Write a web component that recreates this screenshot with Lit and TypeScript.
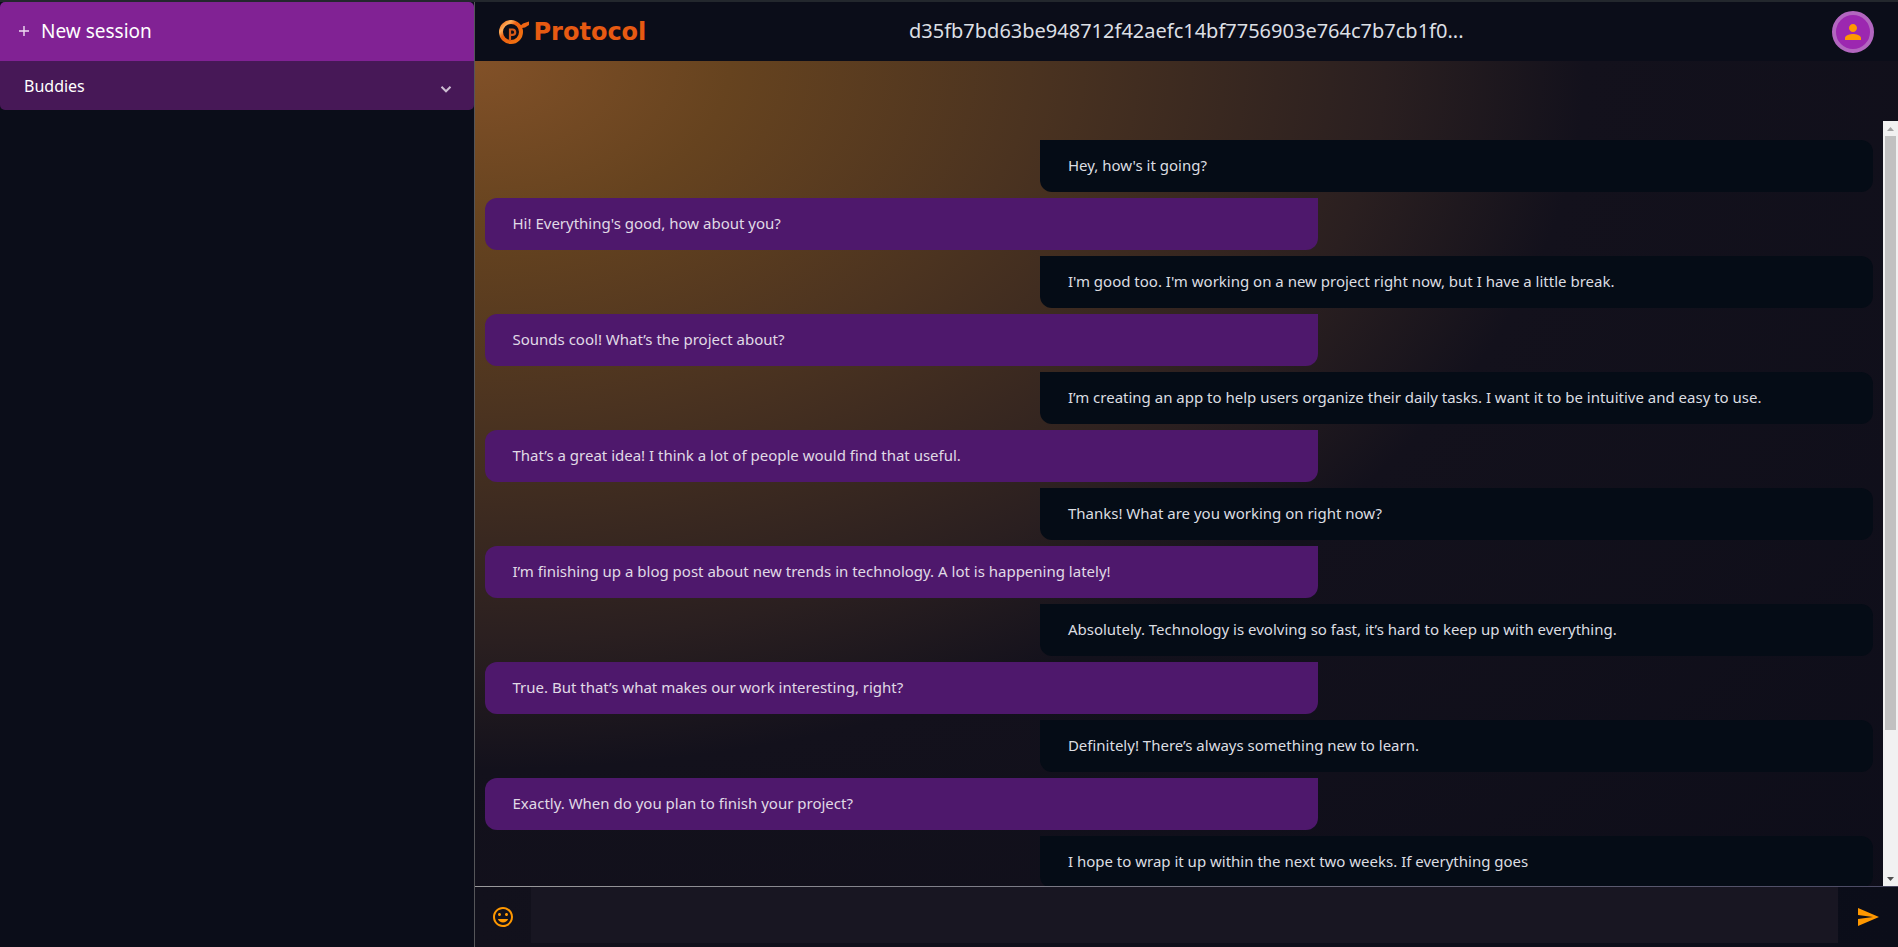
import { LitElement, html, css } from "lit";
import { customElement, query, state } from "lit/decorators.js";
import { classMap } from "lit/directives/class-map.js";
import { styleMap } from "lit/directives/style-map.js";

interface Message {
  text: string;
  own: boolean;
}

const MESSAGES: Message[] = [
  { own: true, text: "Hey, how's it going?" },
  { own: false, text: "Hi! Everything's good, how about you?" },
  { own: true, text: "I'm good too. I'm working on a new project right now, but I have a little break." },
  { own: false, text: "Sounds cool! What’s the project about?" },
  { own: true, text: "I’m creating an app to help users organize their daily tasks. I want it to be intuitive and easy to use." },
  { own: false, text: "That’s a great idea! I think a lot of people would find that useful." },
  { own: true, text: "Thanks! What are you working on right now?" },
  { own: false, text: "I’m finishing up a blog post about new trends in technology. A lot is happening lately!" },
  { own: true, text: "Absolutely. Technology is evolving so fast, it’s hard to keep up with everything." },
  { own: false, text: "True. But that’s what makes our work interesting, right?" },
  { own: true, text: "Definitely! There’s always something new to learn." },
  { own: false, text: "Exactly. When do you plan to finish your project?" },
  { own: true, text: "I hope to wrap it up within the next two weeks. If everything goes" },
  { own: true, text: "" },
  { own: false, text: "" },
];

@customElement("chat-sidebar")
export class ChatSidebar extends LitElement {
  static styles = css`
    :host {
      display: block;
      border-right: 1px solid #555559;
      color: #fff;
    }
    button {
      display: flex;
      align-items: center;
      width: 100%;
      border: 0;
      color: inherit;
      font-family: inherit;
      cursor: pointer;
    }
    .new {
      height: 59px;
      padding: 0 18px 2px;
      gap: 11px;
      background: #812294;
      border-radius: 5px 5px 0 0;
      font-size: 19px;
    }
    .buddies {
      height: 49px;
      padding: 0 19px 0 24px;
      justify-content: space-between;
      background: #471857;
      border-radius: 0 0 5px 5px;
      font-size: 16px;
    }
    .plus {
      width: 12px;
      height: 12px;
      stroke: #f0def3;
      stroke-width: 1.4;
    }
    .chevron {
      width: 18px;
      height: 18px;
      margin-top: 6px;
      fill: none;
      stroke: #cdbfd2;
      stroke-width: 2.600;
    }
  `;

  render() {
    return html`
      <button class="new">
        <svg class="plus" viewBox="0 0 12 12" aria-hidden="true"><path d="M6 1v10M1 6h10" /></svg>
        <span>New session</span>
      </button>
      <button class="buddies" aria-expanded="false">
        <span>Buddies</span>
        <svg class="chevron" viewBox="0 0 24 24" aria-hidden="true">
          <path d="M6 9l6 6 6-6" />
        </svg>
      </button>
    `;
  }
}

@customElement("chat-header")
export class ChatHeader extends LitElement {
  static styles = css`
    :host {
      display: grid;
      grid-template-columns: 1fr auto 1fr;
      align-items: center;
      height: 59px;
      padding: 0 24px;
      background: #0b0d19;
    }
    .brand {
      display: flex;
      align-items: center;
      gap: 4px;
      color: #e75a12;
      text-decoration: none;
      font: bold 24px "DejaVu Sans", sans-serif;
    }
    .mark {
      width: 31px;
      height: 26px;
    }
    .title {
      margin: 0;
      padding-bottom: 2px;
      color: #dcdfe4;
      font-size: 20px;
      font-weight: 400;
    }
    .avatar {
      display: grid;
      place-items: center;
      justify-self: end;
      width: 42px;
      height: 42px;
      padding: 0;
      border: 4px solid #b366c0;
      border-radius: 50%;
      background: #9c27b0;
      cursor: pointer;
    }
    .avatar svg {
      width: 24px;
      height: 24px;
      fill: #ff9800;
    }
  `;

  render() {
    return html`
      <a class="brand" href="#">
        <svg class="mark" viewBox="0 0 31 26" aria-hidden="true">
          <defs>
            <linearGradient id="g" x1="0" y1="0" x2="1" y2="1">
              <stop offset="0" stop-color="#f26a12" />
              <stop offset=".22" stop-color="#ffae5c" />
              <stop offset=".4" stop-color="#ee6012" />
              <stop offset="1" stop-color="#f0730f" />
            </linearGradient>
          </defs>
          <circle cx="12" cy="13" r="10" fill="none" stroke="url(#g)" stroke-width="4" />
          <path d="M19.500 8.500 24 4.500 30 2.500v3.500l-4 2.500-3 .5-3 3.500z" fill="#ee6514" />
          <path d="M11 22V10.500h2.500a2.700 2.700 0 0 1 0 5.400H12" fill="none" stroke="#d65a18" stroke-width="2.200" />
        </svg>
        <span>Protocol</span>
      </a>
      <h1 class="title">d35fb7bd63be948712f42aefc14bf7756903e764c7b7cb1f0...</h1>
      <button class="avatar" aria-label="Account">
        <svg viewBox="0 0 24 24" aria-hidden="true">
          <path d="M12 12c2.210 0 4-1.790 4-4s-1.790-4-4-4-4 1.790-4 4 1.790 4 4 4zm0 2c-2.670 0-8 1.340-8 4v2h16v-2c0-2.660-5.330-4-8-4z" />
        </svg>
      </button>
    `;
  }
}

@customElement("chat-messages")
export class ChatMessages extends LitElement {
  static styles = css`
    :host {
      display: grid;
      grid-template-columns: 1fr 15px;
      grid-template-rows: minmax(0, 1fr);
      min-height: 0;
    }
    .list {
      display: flex;
      flex-direction: column;
      gap: 6px;
      margin: 0;
      padding: 19px 10px 64px;
      overflow-y: auto;
      scrollbar-width: none;
      list-style: none;
    }
    .message {
      flex: none;
      box-sizing: border-box;
      width: 60%;
      min-height: 52px;
      padding: 15px 28px 17px;
      border-radius: 12px 0 12px 12px;
      background: #4e186c;
      color: #e0dae6;
      font-size: 15px;
      line-height: 20px;
    }
    .own {
      align-self: flex-end;
      border-radius: 0 12px 12px 12px;
      background: #050c16;
      color: #dcdee2;
    }
    .rail {
      display: flex;
      flex-direction: column;
      background: #f1f1f1;
    }
    .arrow {
      display: grid;
      place-items: center;
      flex: none;
      height: 15px;
      padding: 0;
      border: 0;
      background: none;
    }
    .arrow svg {
      width: 7px;
      height: 4px;
      fill: #505050;
    }
    .arrow:disabled svg {
      fill: #a3a3a3;
    }
    .track {
      flex: 1;
      min-height: 0;
      padding: 0 2px;
    }
    .thumb {
      background: #c1c1c1;
    }
  `;

  @query(".list") private list!: HTMLElement;
  @state() private visible = 1;
  @state() private offset = 0;

  private observer = new ResizeObserver(() => this.measure());

  firstUpdated() {
    this.observer.observe(this.list);
    this.measure();
  }

  private measure() {
    const { clientHeight, scrollHeight, scrollTop } = this.list;
    this.visible = clientHeight / scrollHeight;
    this.offset = scrollTop / scrollHeight;
  }

  private step(by: number) {
    this.list.scrollBy({ top: by });
  }

  render() {
    const thumb = {
      height: `${this.visible * 100}%`,
      transform: `translateY(${(this.offset / this.visible) * 100}%)`,
    };
    return html`
      <ul class="list" @scroll=${this.measure}>
        ${MESSAGES.map((m) => html`<li class=${classMap({ message: true, own: m.own })}>${m.text}</li>`)}
      </ul>
      <div class="rail">
        <button class="arrow" aria-label="Scroll up" ?disabled=${this.offset === 0} @click=${() => this.step(-40)}>
          <svg viewBox="0 0 7 4"><path d="M0 4 3.500 0 7 4z" /></svg>
        </button>
        <div class="track"><div class="thumb" style=${styleMap(thumb)}></div></div>
        <button class="arrow" aria-label="Scroll down" @click=${() => this.step(40)}>
          <svg viewBox="0 0 7 4"><path d="M0 0h7L3.500 4z" /></svg>
        </button>
      </div>
    `;
  }
}

@customElement("chat-composer")
export class ChatComposer extends LitElement {
  static styles = css`
    :host {
      display: flex;
      height: 60px;
      border-top: 1px solid;
      border-image: linear-gradient(90deg, #9a9a9c, #4a4963) 1;
      background: linear-gradient(90deg, #12111c, #0b0d19);
    }
    button {
      display: grid;
      place-items: center;
      padding: 0;
      border: 0;
      background: none;
      cursor: pointer;
    }
    .emoji {
      width: 56px;
    }
    .send {
      width: 60px;
    }
    svg {
      width: 24px;
      height: 24px;
      fill: #ff9800;
    }
    .box {
      flex: 1;
      box-sizing: border-box;
      height: 56px;
      padding: 18px;
      border: 0;
      outline: 0;
      resize: none;
      background: #181622;
      color: #e0dae6;
      font: inherit;
    }
  `;

  @state() private draft = "";

  render() {
    return html`
      <button class="emoji" aria-label="Insert emoji">
        <svg viewBox="0 0 24 24" aria-hidden="true">
          <path d="M11.990 2C6.470 2 2 6.480 2 12s4.470 10 9.990 10C17.520 22 22 17.520 22 12S17.520 2 11.990 2zM12 20c-4.420 0-8-3.580-8-8s3.580-8 8-8 8 3.580 8 8-3.580 8-8 8zm3.500-9c.83 0 1.500-.67 1.500-1.500S16.330 8 15.500 8 14 8.670 14 9.500s.67 1.500 1.500 1.500zm-7 0c.83 0 1.500-.67 1.500-1.500S9.330 8 8.500 8 7 8.670 7 9.500 7.670 11 8.500 11zm3.500 6.500c2.330 0 4.310-1.460 5.110-3.500H6.890c.8 2.040 2.780 3.500 5.110 3.500z" />
        </svg>
      </button>
      <textarea
        class="box"
        aria-label="Message"
        .value=${this.draft}
        @input=${(e: Event) => (this.draft = (e.target as HTMLTextAreaElement).value)}
      ></textarea>
      <button class="send" aria-label="Send">
        <svg viewBox="0 0 24 24" aria-hidden="true">
          <path d="M2.010 21 23 12 2.010 3 2 10l15 2-15 2z" />
        </svg>
      </button>
    `;
  }
}

@customElement("app-root")
export class AppRoot extends LitElement {
  static styles = css`
    :host {
      display: grid;
      grid-template-columns: 1fr 3fr;
      box-sizing: border-box;
      height: 100vh;
      border-top: 2px solid #23272d;
      background: #0b0d19;
      font-family: "Noto Sans", sans-serif;
    }
    .main {
      display: flex;
      flex-direction: column;
      min-width: 0;
      min-height: 0;
    }
    .conversation {
      display: flex;
      flex: 1;
      flex-direction: column;
      min-height: 0;
      padding-top: 60px;
      background: radial-gradient(
        ellipse 78% 80% at top left,
        #825128 0%,
        #66431f 23%,
        #4b3320 50%,
        #2a1f20 82%,
        #13111c 100%,
        #0d0d19 180%
      );
    }
    chat-messages {
      flex: 1;
    }
  `;

  render() {
    return html`
      <chat-sidebar></chat-sidebar>
      <main class="main">
        <chat-header></chat-header>
        <section class="conversation">
          <chat-messages></chat-messages>
          <chat-composer></chat-composer>
        </section>
      </main>
    `;
  }
}
